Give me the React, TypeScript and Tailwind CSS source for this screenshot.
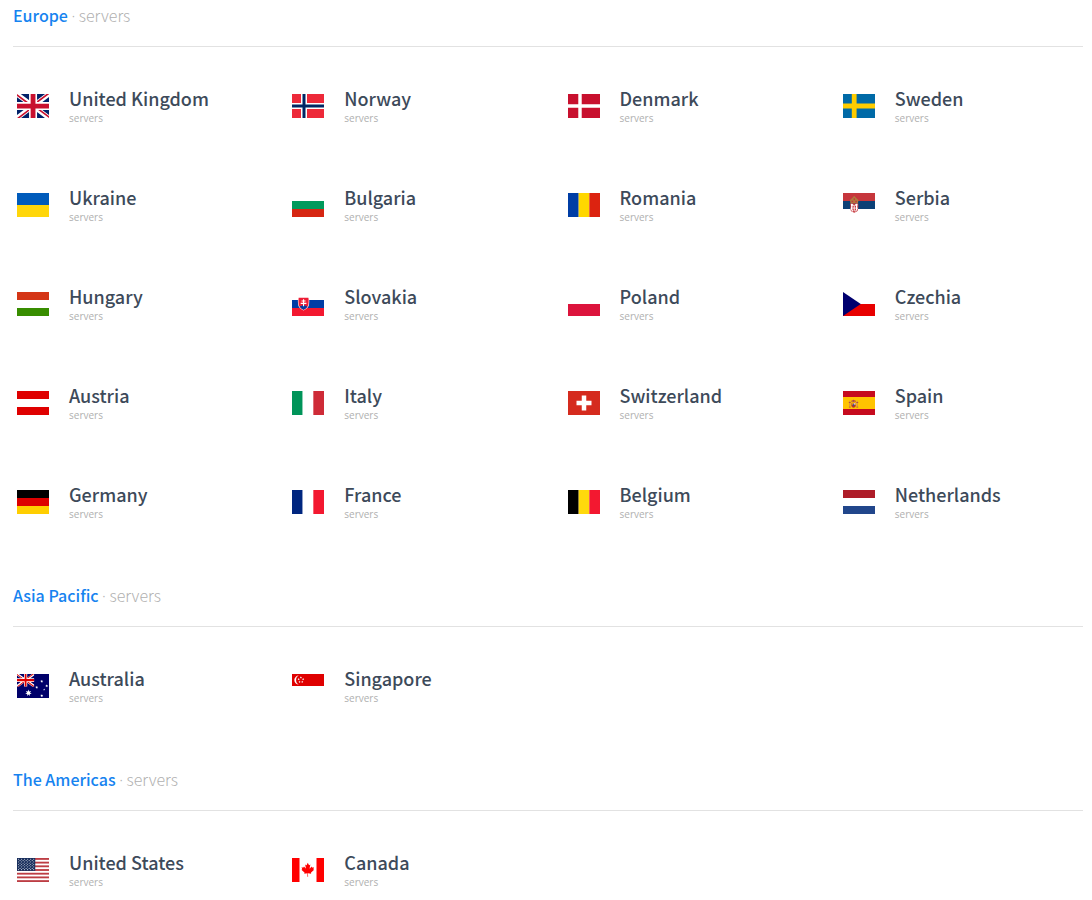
import type { ReactNode } from "react";

function starPoints(cx: number, cy: number, r: number, points: number, inner = 0.45): string {
  const out: string[] = [];
  for (let i = 0; i < points * 2; i++) {
    const radius = i % 2 === 0 ? r : r * inner;
    const a = (Math.PI * i) / points - Math.PI / 2;
    out.push(`${(cx + radius * Math.cos(a)).toFixed(1)},${(cy + radius * Math.sin(a)).toFixed(1)}`);
  }
  return out.join(" ");
}

function Rows({ colors }: { colors: string[] }) {
  const h = 480 / colors.length;
  return (
    <>
      {colors.map((c, i) => (
        <rect key={i} y={i * h} width="640" height={h} fill={c} />
      ))}
    </>
  );
}

function Cols({ colors }: { colors: string[] }) {
  const w = 640 / colors.length;
  return (
    <>
      {colors.map((c, i) => (
        <rect key={i} x={i * w} width={w} height="480" fill={c} />
      ))}
    </>
  );
}

const canadaLeaf =
  "M201 232l-13.3 4.4 61.4 54c4.7 13.7-1.6 17.8-5.6 25l66.6-8.4-1.6 67 13.9-.3-3.1-66.6 66.7 8c-4.1-8.7-7.8-13.3-4-27.2l61.3-51-10.7-4c-8.8-6.8 3.8-32.6 5.6-48.9 0 0-35.7 12.3-38 5.8l-9.2-17.5-32.6 35.8c-3.5.9-5-.5-5.9-3.5l15-74.8-23.8 13.4c-2 .9-4 .1-5.2-2.2l-23-46-23.6 47.8c-1.8 1.7-3.6 1.9-5 .7L264 130.8l13.7 74.1c-1.1 3-3.7 3.8-6.7 2.2l-31.2-35.3c-4 6.5-6.8 17.1-12.2 19.5-5.4 2.3-23.5-4.5-35.6-7 4.2 14.8 17 39.6 9 47.7z";

const flags: Record<string, ReactNode> = {
  "United Kingdom": (
    <>
      <path fill="#012169" d="M0 0h640v480H0z" />
      <path fill="#fff" d="M75 0l244 181L562 0h78v62L400 241l240 178v61h-80L320 301 81 480H0v-60l239-178L0 64V0z" />
      <path fill="#c8102e" d="M424 281l216 159v40L369 281zm-184 20l6 35L54 480H0zM640 0v3L391 191l2-44L590 0zM0 0l239 176h-60L0 42z" />
      <path fill="#fff" d="M241 0v480h160V0zM0 160v160h640V160z" />
      <path fill="#c8102e" d="M0 193v96h640v-96zM273 0v480h96V0z" />
    </>
  ),
  Norway: (
    <>
      <path fill="#ed2939" d="M0 0h640v480H0z" />
      <path fill="#fff" d="M180 0h120v480H180zM0 180h640v120H0z" />
      <path fill="#002664" d="M210 0h60v480h-60zM0 210h640v60H0z" />
    </>
  ),
  Denmark: (
    <>
      <path fill="#c8102e" d="M0 0h640v480H0z" />
      <path fill="#fff" d="M205.7 0h68.6v480h-68.6zM0 205.7h640v68.6H0z" />
    </>
  ),
  Sweden: (
    <>
      <path fill="#006aa7" d="M0 0h640v480H0z" />
      <path fill="#fecc00" d="M176 0h96v480h-96zM0 192h640v96H0z" />
    </>
  ),
  Ukraine: <Rows colors={["#005bbb", "#ffd60a"]} />,
  Bulgaria: <Rows colors={["#fff", "#009a5c", "#d62612"]} />,
  Romania: <Cols colors={["#003da5", "#ffd700", "#dc2310"]} />,
  Serbia: (
    <>
      <Rows colors={["#c6363c", "#0c4076", "#fff"]} />
      <path fill="#c6363c" d="M145 205q-10 120 25 165l55 25 55-25q35-45 25-165z" />
      <path fill="#fff" d="M155 215h30l38 35 38-35h32l-8 65 10 30-35 65-38-25-38 25-32-65 12-35z" />
      <path fill="#c6363c" d="M190 255h70v85l-35 30-35-30z" />
      <path stroke="#fff" strokeWidth="17" d="M225 260v105M192 302h66" />
      <path fill="#b07a3c" d="M148 205l-8-65 55-50 28-35 30 35 55 50-8 65z" />
      <path fill="#c6363c" d="M170 155h34v32h-34zm74 0h34v32h-34zM213 105h25v38h-25z" />
    </>
  ),
  Hungary: <Rows colors={["#d43516", "#fff", "#388d00"]} />,
  Slovakia: (
    <>
      <Rows colors={["#fff", "#003da5", "#f31830"]} />
      <path fill="#fff" d="M122 114h218q10 75 0 140-15 70-109 117-94-47-109-117-10-65 0-140z" />
      <path fill="#ee1c35" d="M133 114h196q10 80 0 137-12 65-98 108-86-43-98-108-10-57 0-137z" />
      <path fill="#003da5" d="M158 297q15-25 38-18 20-30 35-30t35 30q23-7 38 18-25 37-73 60-48-23-73-60z" />
      <path fill="none" stroke="#fff" strokeWidth="22" d="M231 143v142M191 180h80M174 228h114" />
    </>
  ),
  Poland: <Rows colors={["#fff", "#dc143c"]} />,
  Czechia: (
    <>
      <Rows colors={["#fff", "#e80000"]} />
      <path fill="#00006f" d="M0 0l355 240L0 480z" />
    </>
  ),
  Austria: <Rows colors={["#df0000", "#fff", "#df0000"]} />,
  Italy: <Cols colors={["#009459", "#fff", "#ce2b37"]} />,
  Switzerland: (
    <>
      <path fill="#d52b1e" d="M0 0h640v480H0z" />
      <path fill="#fff" d="M170 195h300v90H170zM275 90h90v300h-90z" />
    </>
  ),
  Spain: (
    <>
      <path fill="#c60b1e" d="M0 0h640v480H0z" />
      <path fill="#ffc400" d="M0 120h640v240H0z" />
      <path fill="#d08a50" d="M126 195h20v130h-20zm148 0h20v130h-20z" />
      <path fill="#b5523a" d="M116 222h38v18h-38zm150 0h38v18h-38zM118 315h36v14h-36zm150 0h36v14h-36z" />
      <path fill="#b8352a" d="M167 238h88v62q-10 33-44 36-34-3-44-36z" />
      <path fill="#d99a2a" d="M170 240h38v35h-38z" />
      <path fill="#d8c4c4" d="M214 240h38v35h-38z" />
      <ellipse cx="211" cy="282" rx="14" ry="16" fill="#005bbf" />
      <path fill="#b5412a" d="M174 225l-7-28 22-10 22-12 22 12 22 10-7 28z" />
      <path fill="#c8b1a0" d="M185 196h18v14h-18zm32 0h18v14h-18z" />
    </>
  ),
  Germany: <Rows colors={["#000", "#dd0000", "#ffce00"]} />,
  France: <Cols colors={["#00267f", "#fff", "#f31830"]} />,
  Belgium: <Cols colors={["#000", "#ffd90c", "#f31830"]} />,
  Netherlands: <Rows colors={["#ae1c28", "#fff", "#21468b"]} />,
  Australia: (
    <>
      <path fill="#00006a" d="M0 0h640v480H0z" />
      <path fill="#fff" d="M0 0h40l132 96L304 0h38v28L218 120l124 92v36h-38l-132-96L40 248H0v-32l126-94L0 30z" />
      <path fill="#e00000" d="M0 0l126 92h-32L0 22zM342 0L216 92h-30L312 0zM0 248l126-92h30L30 248zM342 240L226 156h-32l124 92h24z" />
      <path fill="#fff" d="M140 0h64v248h-64zM0 86h342v76H0z" />
      <path fill="#e00000" d="M154 0h36v248h-36zM0 102h342v44H0z" />
      <g fill="#fff">
        <polygon points={starPoints(230, 380, 68, 7)} />
        <polygon points={starPoints(495, 148, 31, 7)} />
        <polygon points={starPoints(394, 268, 31, 7)} />
        <polygon points={starPoints(594, 238, 31, 7)} />
        <polygon points={starPoints(543, 312, 20, 5)} />
        <polygon points={starPoints(495, 434, 31, 7)} />
      </g>
    </>
  ),
  Singapore: (
    <>
      <Rows colors={["#df0000", "#fff"]} />
      <path fill="#fff" d="M136 32a90 90 0 1 0 0 180c-72-24-72-156 0-180z" />
      <g fill="#fff">
        <polygon points={starPoints(178, 70, 23, 5)} />
        <polygon points={starPoints(133, 105, 23, 5)} />
        <polygon points={starPoints(223, 105, 23, 5)} />
        <polygon points={starPoints(151, 158, 23, 5)} />
        <polygon points={starPoints(205, 158, 23, 5)} />
      </g>
    </>
  ),
  "United States": (
    <>
      <path fill="#fff" d="M0 0h640v480H0z" />
      {[0, 1, 2, 3, 4, 5, 6].map((i) => (
        <rect key={i} y={i * 73.85} width="640" height="36.92" fill="#bd3d44" />
      ))}
      <path fill="#192f5d" d="M0 0h364.8v258.5H0z" />
      <g fill="#fff">
        {Array.from({ length: 9 }, (_, r) =>
          Array.from({ length: r % 2 === 0 ? 6 : 5 }, (_, c) => (
            <polygon
              key={`${r}-${c}`}
              points={starPoints(30.4 + c * 60.8 + (r % 2 === 0 ? 0 : 30.4), 26 + r * 25.8, 14, 5)}
            />
          )),
        )}
      </g>
    </>
  ),
  Canada: (
    <>
      <path fill="#fff" d="M0 0h640v480H0z" />
      <path fill="#f00" d="M0 0h150v480H0zM490 0h150v480H490z" />
      <path fill="#f00" d={canadaLeaf} />
    </>
  ),
};

const regions = [
  {
    name: "Europe",
    countries: [
      "United Kingdom", "Norway", "Denmark", "Sweden",
      "Ukraine", "Bulgaria", "Romania", "Serbia",
      "Hungary", "Slovakia", "Poland", "Czechia",
      "Austria", "Italy", "Switzerland", "Spain",
      "Germany", "France", "Belgium", "Netherlands",
    ],
  },
  { name: "Asia Pacific", countries: ["Australia", "Singapore"] },
  { name: "The Americas", countries: ["United States", "Canada"] },
];

function Country({ name }: { name: string }) {
  return (
    <li className="flex items-center gap-5 pl-1">
      <svg viewBox="0 0 640 480" className="h-6 w-8 shrink-0" aria-hidden="true">
        {flags[name]}
      </svg>
      <div className="min-w-0">
        <h3 className="mb-0.5 text-[18px] leading-[22px] font-medium whitespace-nowrap text-[#3d4a5a]">{name}</h3>
        <p className="font-['Open_Sans',sans-serif] text-[10px] leading-[14px] text-[#b0b0b0]">servers</p>
      </div>
    </li>
  );
}

export default function App() {
  return (
    <main className="flex flex-col gap-[59px] bg-white pr-[9px] pl-[13px] font-['Noto_Sans_CJK_SC',sans-serif]">
      {regions.map((region) => (
        <section key={region.name}>
          <h2 className="border-b border-[#e2e2e2] pb-4 text-[16px] leading-[30px] font-light text-[#b0b0b0]">
            <span className="font-medium text-[#1683f0]">{region.name}</span>{" "}
            <span className="font-['Open_Sans',sans-serif] leading-none">·</span> servers
          </h2>
          <ul className="grid grid-cols-4 gap-x-[31px] gap-y-[61px] pt-10">
            {region.countries.map((c) => (
              <Country key={c} name={c} />
            ))}
          </ul>
        </section>
      ))}
    </main>
  );
}
